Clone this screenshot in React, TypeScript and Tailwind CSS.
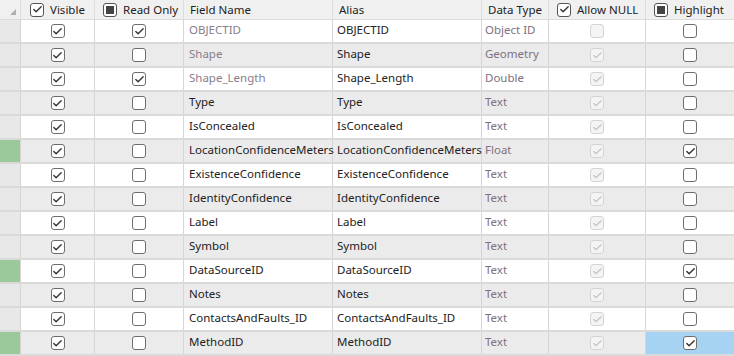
import { Check } from 'lucide-react'

type Row = {
  field: string
  alias: string
  type: string
  readOnly: boolean
  locked?: boolean
  allowNullDisabledEmpty?: boolean
  highlight: boolean
  mark?: boolean
  selected?: boolean
}

const rows: Row[] = [
  { field: 'OBJECTID', alias: 'OBJECTID', type: 'Object ID', readOnly: true, locked: true, allowNullDisabledEmpty: true, highlight: false },
  { field: 'Shape', alias: 'Shape', type: 'Geometry', readOnly: false, locked: true, highlight: false },
  { field: 'Shape_Length', alias: 'Shape_Length', type: 'Double', readOnly: true, locked: true, highlight: false },
  { field: 'Type', alias: 'Type', type: 'Text', readOnly: false, highlight: false },
  { field: 'IsConcealed', alias: 'IsConcealed', type: 'Text', readOnly: false, highlight: false },
  { field: 'LocationConfidenceMeters', alias: 'LocationConfidenceMeters', type: 'Float', readOnly: false, highlight: true, mark: true },
  { field: 'ExistenceConfidence', alias: 'ExistenceConfidence', type: 'Text', readOnly: false, highlight: false },
  { field: 'IdentityConfidence', alias: 'IdentityConfidence', type: 'Text', readOnly: false, highlight: false },
  { field: 'Label', alias: 'Label', type: 'Text', readOnly: false, highlight: false },
  { field: 'Symbol', alias: 'Symbol', type: 'Text', readOnly: false, highlight: false },
  { field: 'DataSourceID', alias: 'DataSourceID', type: 'Text', readOnly: false, highlight: true, mark: true },
  { field: 'Notes', alias: 'Notes', type: 'Text', readOnly: false, highlight: false },
  { field: 'ContactsAndFaults_ID', alias: 'ContactsAndFaults_ID', type: 'Text', readOnly: false, highlight: false },
  { field: 'MethodID', alias: 'MethodID', type: 'Text', readOnly: false, highlight: true, mark: true, selected: true },
]

const cols = 'grid grid-cols-[21px_74px_89px_149px_149px_67px_97px_88px]'

function Box({ checked, disabled }: { checked?: boolean; disabled?: boolean }) {
  return (
    <span
      className={`flex h-[14px] w-[14px] items-center justify-center rounded-[3px] border ${
        disabled ? 'border-[#d4d4d4] bg-[#f4f4f4]' : 'border-[#6e6e6e] bg-white'
      }`}
    >
      {checked && (
        <Check size={11} strokeWidth={3} className={disabled ? 'text-[#c8c8c8]' : 'text-[#333]'} />
      )}
    </span>
  )
}

function HeadBox({ kind }: { kind: 'check' | 'square' }) {
  return (
    <span className="flex h-[14px] w-[14px] items-center justify-center rounded-[3px] border border-[#555] bg-white">
      {kind === 'check' ? (
        <Check size={11} strokeWidth={3} className="text-[#333]" />
      ) : (
        <span className="h-[8px] w-[8px] bg-[#444]" />
      )}
    </span>
  )
}

export default function App() {
  return (
    <div className="h-[356px] w-[734px] overflow-hidden bg-white font-['Noto_Sans',sans-serif] text-[11.5px] text-[#222]">
      <div className={`${cols} h-[20px] bg-[#f0f0f0] border-b border-[#dcdcdc]`}>
        <div className="relative border-r border-[#dcdcdc]">
          <svg width="6" height="6" className="absolute bottom-[4px] right-[4px]" viewBox="0 0 6 6">
            <path d="M6 0 L6 6 L0 6 Z" fill="#b0b0b0" />
          </svg>
        </div>
        <div className="flex items-center gap-[6px] border-r border-[#dcdcdc] pl-[9px]">
          <HeadBox kind="check" />
          <span>Visible</span>
        </div>
        <div className="flex items-center gap-[6px] border-r border-[#dcdcdc] pl-[8px]">
          <HeadBox kind="square" />
          <span>Read Only</span>
        </div>
        <div className="flex items-center border-r border-[#dcdcdc] pl-[6px]">Field Name</div>
        <div className="flex items-center border-r border-[#dcdcdc] pl-[6px]">Alias</div>
        <div className="flex items-center border-r border-[#dcdcdc] pl-[6px]">Data Type</div>
        <div className="flex items-center gap-[6px] border-r border-[#dcdcdc] pl-[8px]">
          <HeadBox kind="check" />
          <span>Allow NULL</span>
        </div>
        <div className="flex items-center gap-[6px] pl-[8px]">
          <HeadBox kind="square" />
          <span>Highlight</span>
        </div>
      </div>

      {rows.map((r, i) => {
        const bg = i % 2 === 0 ? 'bg-white' : 'bg-[#ebebeb]'
        return (
          <div key={r.field} className={`${cols} h-[24px] border-b-2 border-[#dadada] ${bg}`}>
            <div className={`border-r border-[#d6d6d6] ${r.mark ? 'bg-[#9cc99c]' : 'bg-[#e8e8e8]'}`} />
            <div className="flex items-center justify-center border-r border-[#d6d6d6]">
              <Box checked />
            </div>
            <div className="flex items-center justify-center border-r border-[#d6d6d6]">
              <Box checked={r.readOnly} />
            </div>
            <div className={`border-r border-[#d6d6d6] pl-[5px] pt-[1px] ${r.locked ? 'text-[#8a7d8a]' : 'text-[#222]'}`}>
              {r.field}
            </div>
            <div className="border-r border-[#d6d6d6] pl-[4px] pt-[1px] text-[#222]">{r.alias}</div>
            <div className="border-r border-[#d6d6d6] pl-[3px] pt-[1px] text-[#807080]">{r.type}</div>
            <div className="flex items-center justify-center border-r border-[#d6d6d6]">
              <Box checked={!r.allowNullDisabledEmpty} disabled />
            </div>
            <div className={`flex items-center justify-center ${r.selected ? 'bg-[#a6d3f2]' : ''}`}>
              <Box checked={r.highlight} />
            </div>
          </div>
        )
      })}
    </div>
  )
}
